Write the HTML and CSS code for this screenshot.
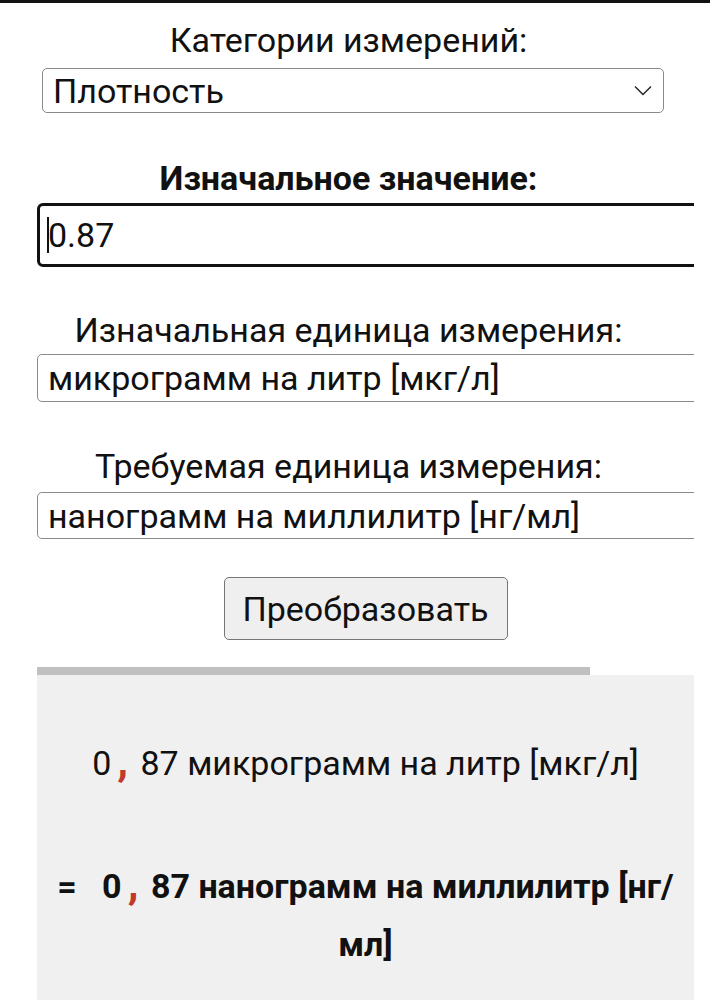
FILE: index.html
```html
<!DOCTYPE html>
<html lang="ru">
<head>
<meta charset="utf-8">
<link rel="stylesheet" href="styles.css">
</head>
<body>
<div class="topbar"></div>
<div class="form">
  <div class="label first">Категории измерений:</div>
  <div class="select cat"><span>Плотность</span>
    <svg class="chev" width="18" height="11" viewBox="0 0 18 11"><path d="M1 1.5 L9 9.5 L17 1.5" fill="none" stroke="#222" stroke-width="1.4"/></svg>
  </div>
  <div class="label bold">Изначальное значение:</div>
  <div class="input"><span class="caret"></span>0.87</div>
  <div class="label l3">Изначальная единица измерения:</div>
  <div class="select wide s2"><span>микрограмм на литр [мкг/л]</span></div>
  <div class="label l4">Требуемая единица измерения:</div>
  <div class="select wide s3"><span>нанограмм на миллилитр [нг/мл]</span></div>
</div>
<div class="btnrow"><div class="btn">Преобразовать</div></div>
<div class="progress"></div>
<div class="result">
  <p class="line1">0<span class="comma">,</span> 87 микрограмм на литр [мкг/л]</p>
  <p class="line2">=&nbsp;&nbsp; 0<span class="comma">,</span> 87 нанограмм на миллилитр [нг/ мл]</p>
</div>
</body>
</html>
```

FILE: styles.css
```css
html, body { margin: 0; padding: 0; background: #fff; }
body { font-family: Roboto, "Noto Sans", sans-serif; color: #111; overflow: hidden; height: 1000px; }
.topbar { height: 3px; background: #111; }
.form { margin-left: 37px; width: 657px; overflow: hidden; }
.label { width: 623px; text-align: center; font-size: 34px; line-height: 36px; white-space: nowrap; }
.label.first { margin-top: 19px; }
.label.bold { font-weight: 700; margin-top: 47px; font-size: 34px; }
.select { box-sizing: border-box; border: 1.5px solid #8a8a8a; border-radius: 5px; display: flex; align-items: center; font-size: 34px; padding-left: 10px; white-space: nowrap; }
.select.cat { margin-left: 5px; width: 622px; height: 45px; margin-top: 10px; justify-content: space-between; padding-right: 11px; }
.select.wide { width: 700px; }
.s2 { height: 48px; margin-top: 6px; }
.s3 { height: 47px; margin-top: 8px; }
.input { box-sizing: border-box; width: 700px; height: 64px; margin-top: 7px; border: 3.5px solid #111; border-radius: 6px; font-size: 34px; display: flex; align-items: center; padding-left: 7px; }
.caret { display: inline-block; width: 2px; height: 36px; background: #111; margin-right: -1px; }
.l3 { margin-top: 45px; }
.l4 { margin-top: 46px; }
.btnrow { display: flex; justify-content: center; margin-left: 37px; width: 657px; margin-top: 38px; }
.btn { box-sizing: border-box; height: 63px; width: 284px; background: #efefef; border: 1.5px solid #767676; border-radius: 5px; font-size: 34px; display: flex; align-items: center; justify-content: center; }
.progress { margin-left: 37px; width: 553px; height: 8px; background: #c0c0c0; margin-top: 27px; }
.result { margin-left: 37px; width: 657px; background: #f0f0f0; height: 400px; text-align: center; padding-top: 63px; box-sizing: border-box; }
.result p { margin: 0; font-size: 34px; }
.line1 { line-height: 44px; }
.line2 { font-weight: 700; line-height: 58px; margin-top: 69px !important; padding: 0 20px; }
.comma { color: #c0392b; font-weight: 700; font-size: 44px; margin: 0 4px 0 6px; }
```
